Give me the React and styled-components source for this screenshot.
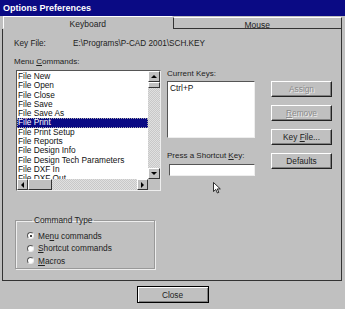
import styled, { createGlobalStyle } from 'styled-components';

const Global = createGlobalStyle`
  html, body { margin: 0; padding: 0; background: #c0c0c0; }
  body { font-family: "Liberation Sans", Arial, sans-serif; font-size: 8px; color: #000; }
  * { box-sizing: border-box; }
`;

const Dialog = styled.div`
  width: 345px;
  height: 309px;
  background: #c0c0c0;
  display: flex;
  flex-direction: column;
  overflow: hidden;
`;

const TitleBar = styled.div`
  height: 16px;
  flex-shrink: 0;
  background: #0a0a84;
  color: #fff;
  font-weight: bold;
  font-size: 9px;
  display: flex;
  align-items: center;
  padding-left: 3px;
`;

const Tabs = styled.div`
  display: flex;
  height: 13px;
  flex-shrink: 0;
  margin: 0 3px 0 3px;
`;

const Tab = styled.div`
  flex: 1;
  display: flex;
  align-items: center;
  justify-content: center;
  padding-top: 3px;
  font-size: 8.5px;
  color: #222;
  border-top: 1px solid #fff;
  border-left: 1px solid ${p => (p.$active ? '#fff' : '#333')};
  border-right: 1px solid ${p => (p.$active ? '#c0c0c0' : '#333')};
  border-bottom: 1px solid ${p => (p.$active ? '#c0c0c0' : '#333')};
  margin-top: ${p => (p.$active ? '0' : '1px')};
`;

const Panel = styled.div`
  height: 252px;
  flex-shrink: 0;
  margin: 0 3px 0 2px;
  border-left: 1px solid #333;
  border-right: 1px solid #333;
  border-bottom: 1px solid #333;
  padding: 8px 0 0 11px;
  display: flex;
  flex-direction: column;
`;

const KeyFileRow = styled.div`
  display: grid;
  grid-template-columns: 59px auto;
  height: 12px;
  align-items: center;
  color: #222;
  font-size: 8.2px;
`;

const Columns = styled.div`
  display: flex;
  margin-top: 8px;
  flex-shrink: 0;
`;

const LeftCol = styled.div`
  width: 150px;
  display: flex;
  flex-direction: column;
`;

const Label = styled.div`
  height: 10px;
  line-height: 10px;
  color: #222;
  flex-shrink: 0;
  margin-top: ${p => p.$top || 0}px;
  margin-bottom: ${p => p.$gap || 0}px;
`;

const ListBox = styled.div`
  flex-shrink: 0;
  margin-left: 2px;
  width: 145px;
  height: 121px;
  background: #fff;
  border-top: 1px solid #555;
  border-left: 1px solid #555;
  border-right: 1px solid #eee;
  border-bottom: 1px solid #eee;
  display: grid;
  grid-template-columns: 1fr 12px;
  grid-template-rows: 1fr 11px;
`;

const Items = styled.div`
  overflow: hidden;
  padding-top: 1px;
`;

const Item = styled.div`
  height: 9.3px;
  line-height: 9.3px;
  padding-left: 1px;
  white-space: nowrap;
  font-size: 8.3px;
  color: ${p => (p.$sel ? '#fff' : '#111')};
  background: ${p => (p.$sel ? '#0a0a84' : 'transparent')};
  outline: ${p => (p.$sel ? '1px dotted #aaa' : 'none')};
  outline-offset: -1px;
`;

const VScroll = styled.div`
  background: repeating-conic-gradient(#e0e0e0 0 25%, #c8c8c8 0 50%) 0 0 / 2px 2px;
  display: flex;
  flex-direction: column;
`;

const HScroll = styled.div`
  background: repeating-conic-gradient(#e0e0e0 0 25%, #c8c8c8 0 50%) 0 0 / 2px 2px;
  display: flex;
  align-items: stretch;
`;

const Corner = styled.div`
  background: #c0c0c0;
`;

const ScrollBtn = styled.div`
  width: ${p => p.$w || 12}px;
  height: ${p => p.$h || 11}px;
  background: #c0c0c0;
  border-top: 1px solid #fff;
  border-left: 1px solid #fff;
  border-right: 1px solid #333;
  border-bottom: 1px solid #333;
  display: flex;
  align-items: center;
  justify-content: center;
  flex-shrink: 0;
`;

const Spacer = styled.div`
  flex: 1;
`;

const Arrow = ({ dir }) => {
  const pts = {
    up: '1,4 4,1 7,4',
    down: '1,1 4,4 7,1',
    left: '4,1 1,4 4,7',
    right: '1,1 4,4 1,7',
  }[dir];
  const vert = dir === 'up' || dir === 'down';
  return (
    <svg width={vert ? 8 : 5} height={vert ? 5 : 8} viewBox={vert ? '0 0 8 5' : '0 0 5 8'}>
      <polygon points={pts} fill="#000" />
    </svg>
  );
};

const GroupBox = styled.fieldset`
  flex-shrink: 0;
  margin: 24px 0 0 1px;
  width: 140px;
  height: 54px;
  border: 1px solid #999;
  box-shadow: 1px 1px 0 #eee, inset 1px 1px 0 #eee;
  padding: 6px 0 0 11px;
  display: flex;
  flex-direction: column;
  gap: 3px;
  legend {
    padding: 0 2px;
    margin-left: 5px;
    font-size: 8.3px;
    color: #222;
  }
`;

const Radio = styled.label`
  display: flex;
  align-items: center;
  gap: 4px;
  height: 9.5px;
  font-size: 8.3px;
  color: #222;
`;

const Dot = styled.span`
  width: 7px;
  height: 7px;
  border-radius: 50%;
  background: #fff;
  border-top: 1px solid #555;
  border-left: 1px solid #555;
  border-right: 1px solid #eee;
  border-bottom: 1px solid #eee;
  display: flex;
  align-items: center;
  justify-content: center;
  &::after {
    content: '';
    width: 2px;
    height: 2px;
    border-radius: 50%;
    background: ${p => (p.$on ? '#000' : 'transparent')};
  }
`;

const MidCol = styled.div`
  width: 92px;
  margin-left: 3px;
  padding-top: 12px;
  display: flex;
  flex-direction: column;
`;

const KeysBox = styled.div`
  width: 88px;
  height: 57px;
  background: #fff;
  border-top: 1px solid #555;
  border-left: 1px solid #555;
  border-right: 1px solid #eee;
  border-bottom: 1px solid #eee;
  padding: 1px 2px;
  font-size: 8.3px;
  color: #111;
`;

const KeyInput = styled.div`
  margin-left: 2px;
  width: 86px;
  height: 12px;
  background: #fff;
  border-top: 1px solid #555;
  border-left: 1px solid #555;
  border-right: 1px solid #eee;
  border-bottom: 1px solid #eee;
`;

const Cursor = styled.div`
  margin: 6px 0 0 46px;
  height: 12px;
`;

const RightCol = styled.div`
  margin-left: 12px;
  padding-top: 24px;
  display: flex;
  flex-direction: column;
  gap: 8px;
`;

const Button = styled.div`
  width: 61px;
  height: 16px;
  background: #c0c0c0;
  border-top: 1px solid #fff;
  border-left: 1px solid #fff;
  border-right: 1px solid #222;
  border-bottom: 1px solid #222;
  box-shadow: inset -1px -1px 0 #808080;
  display: flex;
  align-items: center;
  justify-content: center;
  font-size: 8.3px;
  color: ${p => (p.$disabled ? '#8a8a8a' : '#222')};
  text-shadow: ${p => (p.$disabled ? '1px 1px 0 #eee' : 'none')};
`;

const Footer = styled.div`
  flex: 1;
  display: flex;
  justify-content: center;
  padding-top: 5px;
`;

const CloseButton = styled(Button)`
  width: 72px;
  height: 17px;
  border: 1px solid #000;
  box-shadow: inset 1px 1px 0 #fff, inset -1px -1px 0 #808080;
`;

const items = [
  'File New',
  'File Open',
  'File Close',
  'File Save',
  'File Save As',
  'File Print',
  'File Print Setup',
  'File Reports',
  'File Design Info',
  'File Design Tech Parameters',
  'File DXF In',
  'File DXF Out',
];

export default function App() {
  return (
    <>
      <Global />
      <Dialog>
        <TitleBar>Options Preferences</TitleBar>
        <Tabs>
          <Tab $active>Keyboard</Tab>
          <Tab>Mouse</Tab>
        </Tabs>
        <Panel>
          <KeyFileRow>
            <span>Key File:</span>
            <span>E:\Programs\P-CAD 2001\SCH.KEY</span>
          </KeyFileRow>
          <Columns>
            <LeftCol>
              <Label $gap={3}>
                Menu <u>C</u>ommands:
              </Label>
              <ListBox>
                <Items>
                  {items.map(it => (
                    <Item key={it} $sel={it === 'File Print'}>
                      {it}
                    </Item>
                  ))}
                </Items>
                <VScroll>
                  <ScrollBtn $h={11}>
                    <Arrow dir="up" />
                  </ScrollBtn>
                  <ScrollBtn $h={6} />
                  <Spacer />
                  <ScrollBtn $h={11}>
                    <Arrow dir="down" />
                  </ScrollBtn>
                </VScroll>
                <HScroll>
                  <ScrollBtn $w={11}>
                    <Arrow dir="left" />
                  </ScrollBtn>
                  <ScrollBtn $w={24} />
                  <Spacer />
                  <ScrollBtn $w={11}>
                    <Arrow dir="right" />
                  </ScrollBtn>
                </HScroll>
                <Corner />
              </ListBox>
              <GroupBox>
                <legend>Command Type</legend>
                <Radio>
                  <Dot $on />
                  <span>
                    Me<u>n</u>u commands
                  </span>
                </Radio>
                <Radio>
                  <Dot />
                  <span>
                    <u>S</u>hortcut commands
                  </span>
                </Radio>
                <Radio>
                  <Dot />
                  <span>
                    <u>M</u>acros
                  </span>
                </Radio>
              </GroupBox>
            </LeftCol>
            <MidCol>
              <Label $gap={2}>Current Keys:</Label>
              <KeysBox>Ctrl+P</KeysBox>
              <Label $gap={3} $top={13}>
                Press a Shortcut <u>K</u>ey:
              </Label>
              <KeyInput />
              <Cursor>
                <svg width="8" height="12" viewBox="0 0 8 12">
                  <path d="M0.5 0.5 L0.5 9.5 L2.8 7.4 L4.4 11 L5.8 10.4 L4.3 6.9 L7.3 6.9 Z" fill="#fff" stroke="#000" strokeWidth="0.8" />
                </svg>
              </Cursor>
            </MidCol>
            <RightCol>
              <Button $disabled>Assign</Button>
              <Button $disabled>
                <span>
                  <u>R</u>emove
                </span>
              </Button>
              <Button>
                <span>
                  Key <u>F</u>ile...
                </span>
              </Button>
              <Button>Defaults</Button>
            </RightCol>
          </Columns>
        </Panel>
        <Footer>
          <CloseButton>Close</CloseButton>
        </Footer>
      </Dialog>
    </>
  );
}
